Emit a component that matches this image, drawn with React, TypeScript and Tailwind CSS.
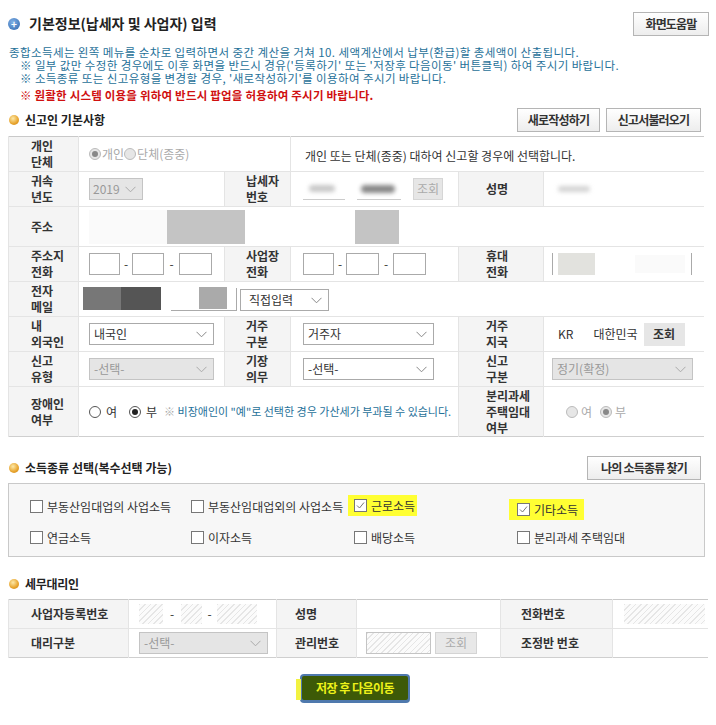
import React from 'react';

const Chevron = ({ color = '#888' }: { color?: string }) => (
  <svg width="11" height="7" viewBox="0 0 11 7" className="shrink-0">
    <path d="M0.5 0.8 L5.5 5.8 L10.5 0.8" fill="none" stroke={color} strokeWidth="1" />
  </svg>
);

const Select = ({ text, className, disabled }: { text: string; className: string; disabled?: boolean }) => (
  <div
    className={`flex items-center justify-between h-[22px] border px-[4px] pr-[6px] text-[12px] whitespace-nowrap ${
      disabled ? 'bg-[#e5e5e5] border-[#c4c4c4] text-[#999]' : 'bg-white border-[#aaa] text-[#333]'
    } ${className}`}
  >
    <span>{text}</span>
    <Chevron color={disabled ? '#aaa' : '#888'} />
  </div>
);

const Radio = ({ on, disabled }: { on?: boolean; disabled?: boolean }) => (
  <span
    className={`inline-flex items-center justify-center w-[12px] h-[12px] rounded-full border ${
      disabled ? 'border-[#bbb] bg-[#e6e6e6]' : 'border-[#555] bg-white'
    }`}
  >
    {on && <span className={`w-[6px] h-[6px] rounded-full ${disabled ? 'bg-[#888]' : 'bg-[#222]'}`} />}
  </span>
);

const Check = ({ on }: { on?: boolean }) => (
  <span className="inline-flex items-center justify-center w-[13px] h-[13px] border border-[#777] bg-white shrink-0">
    {on && (
      <svg width="9" height="9" viewBox="0 0 9 9">
        <path d="M1 4.5 L3.5 7 L8 1.5" fill="none" stroke="#777" strokeWidth="1" />
      </svg>
    )}
  </span>
);

const Box = ({ className }: { className: string }) => <div className={`h-[22px] border border-[#aaa] bg-white ${className}`} />;

const Lbl = ({ children, className = 'pl-[22px]' }: { children: React.ReactNode; className?: string }) => (
  <td className={`bg-[#f4f4f4] border-x border-[#e4e4e4] font-bold text-[12px] leading-[16px] text-[#333] align-middle whitespace-nowrap ${className}`}>
    {children}
  </td>
);

const Btn = ({ children, className = '' }: { children: React.ReactNode; className?: string }) => (
  <button className={`h-[24px] border border-[#b5b5b5] bg-gradient-to-b from-white to-[#ededed] font-bold text-[12px] tracking-[-0.8px] whitespace-nowrap text-[#333] ${className}`}>
    {children}
  </button>
);

const Bullet = () => (
  <span className="inline-block w-[10px] h-[10px] rounded-full bg-[radial-gradient(circle_at_40%_35%,#fde9a8,#e7a32c_60%,#c7811a)] shrink-0" />
);

const Hatch = ({ className }: { className: string }) => (
  <div className={`bg-[image:repeating-linear-gradient(135deg,#e6e6e6_0px,#e6e6e6_1px,#fbfbfb_1px,#fbfbfb_4px)] ${className}`} />
);

export default function App() {
  const tr = 'border-b border-[#e4e4e4]';
  return (
    <div className="w-[716px] h-[725px] bg-white font-['Noto_Sans_CJK_KR',sans-serif] text-[#333] pl-[8px] pr-[10px] pt-[12px]">
      {/* 제목 */}
      <div className="flex justify-between items-start">
        <div className="flex items-center gap-[9px] pt-[1px]">
          <span className="inline-flex items-center justify-center w-[12px] h-[12px] rounded-full bg-[radial-gradient(circle_at_40%_35%,#7fb0e6,#2e66ad)] text-white text-[10px] leading-none font-bold">+</span>
          <span className="text-[14px] font-bold text-[#222]">기본정보(납세자 및 사업자) 입력</span>
        </div>
        <Btn className="mr-[-3px] w-[76px]">화면도움말</Btn>
      </div>

      {/* 안내 */}
      <div className="mt-[10px] text-[11.5px] leading-[13px] tracking-[0.4px] text-[#1f7199] whitespace-nowrap">
        <p className="pl-[1px]">종합소득세는 왼쪽 메뉴를 순차로 입력하면서 중간 계산을 거쳐 10. 세액계산에서 납부(환급)할 총세액이 산출됩니다.</p>
        <p className="pl-[12px]">※ 일부 값만 수정한 경우에도 이후 화면을 반드시 경유('등록하기' 또는 '저장후 다음이동' 버튼클릭) 하여 주시기 바랍니다.</p>
        <p className="pl-[12px]">※ 소득종류 또는 신고유형을 변경할 경우, '새로작성하기'를 이용하여 주시기 바랍니다.</p>
        <p className="pl-[12px] mt-[4px] text-[#d01010] font-bold tracking-[0.2px]">※ 원활한 시스템 이용을 위하여 반드시 팝업을 허용하여 주시기 바랍니다.</p>
      </div>

      {/* 신고인 기본사항 */}
      <div className="mt-[6px] flex justify-between items-center h-[23px]">
        <div className="flex items-center gap-[6px] pl-[1px]">
          <Bullet />
          <span className="text-[12px] font-bold text-[#222]">신고인 기본사항</span>
        </div>
        <div className="flex gap-[6px] mr-[5px]">
          <Btn className="w-[83px]">새로작성하기</Btn>
          <Btn className="w-[95px]">신고서불러오기</Btn>
        </div>
      </div>

      <table className="mt-[5px] w-[696px] table-fixed border-collapse border-t border-t-[#c9c9c9] border-b border-b-[#cfcfcf] text-[12px]">
        <colgroup>
          <col className="w-[70px]" />
          <col className="w-[146px]" />
          <col className="w-[66px]" />
          <col className="w-[168px]" />
          <col className="w-[85px]" />
          <col />
        </colgroup>
        <tbody>
          <tr className={`${tr} h-[35px]`}>
            <Lbl>개인<br />단체</Lbl>
            <td colSpan={2} className="pl-[10px] text-[#aaa] border-r border-[#e4e4e4]">
              <div className="flex items-center">
                <Radio on disabled />
                <span className="ml-[1px]">개인</span>
                <Radio disabled />
                <span className="ml-[1px]">단체(종중)</span>
              </div>
            </td>
            <td colSpan={3} className="pl-[14px] pt-[4px] text-[#333]">개인 또는 단체(종중) 대하여 신고할 경우에 선택합니다.</td>
          </tr>
          <tr className={`${tr} h-[35px]`}>
            <Lbl>귀속<br />년도</Lbl>
            <td className="pl-[10px]">
              <Select text="2019" disabled className="w-[54px] text-[#888] pl-[3px] pr-[4px]" />
            </td>
            <Lbl className="pl-[21px]">납세자<br />번호</Lbl>
            <td className="pl-[12px]">
              <div className="flex items-center gap-[12px]">
                <div className="relative w-[42px] h-[22px] border-b border-[#ccc]">
                  <div className="absolute left-[6px] top-[7px] w-[26px] h-[7px] rounded-full bg-[#c8c8c8] blur-[2px]" />
                </div>
                <div className="relative w-[44px] h-[22px] border-b border-[#ccc]">
                  <div className="absolute left-[4px] top-[7px] w-[34px] h-[8px] rounded-full bg-[#888] blur-[2px]" />
                </div>
                <div className="h-[22px] w-[30px] bg-[#e6e6e6] border border-[#d6d6d6] text-[#aaa] flex items-center justify-center">조회</div>
              </div>
            </td>
            <Lbl className="pl-[27px]">성명</Lbl>
            <td className="pl-[14px]">
              <div className="w-[32px] h-[6px] rounded-full bg-[#d4d4d4] blur-[2px]" />
            </td>
          </tr>
          <tr className={`${tr} h-[40px]`}>
            <Lbl>주소</Lbl>
            <td colSpan={5}>
              <div className="flex items-center h-[34px]">
                <div className="ml-[10px] w-[78px] h-[34px] bg-[#fafafa]" />
                <div className="w-[78px] h-[34px] bg-[#c4c4c4]" />
                <div className="w-[110px]" />
                <div className="w-[44px] h-[34px] bg-[#c4c4c4]" />
              </div>
            </td>
          </tr>
          <tr className={`${tr} h-[35px]`}>
            <Lbl>주소지<br />전화</Lbl>
            <td className="pl-[10px]">
              <div className="flex items-center">
                <Box className="w-[31px]" />
                <span className="w-[12px] text-center">-</span>
                <Box className="w-[32px]" />
                <span className="w-[15px] text-center">-</span>
                <Box className="w-[33px]" />
              </div>
            </td>
            <Lbl className="pl-[21px]">사업장<br />전화</Lbl>
            <td className="pl-[12px]">
              <div className="flex items-center">
                <Box className="w-[31px]" />
                <span className="w-[12px] text-center">-</span>
                <Box className="w-[33px]" />
                <span className="w-[14px] text-center">-</span>
                <Box className="w-[33px]" />
              </div>
            </td>
            <Lbl className="pl-[27px]">휴대<br />전화</Lbl>
            <td className="pl-[8px]">
              <div className="w-[140px] h-[22px] border-x border-[#aaa] flex items-center">
                <div className="ml-[5px] w-[37px] h-[22px] bg-[#e2e2de]" />
                <div className="ml-[40px] w-[50px] h-[18px] bg-[#fafafa]" />
              </div>
            </td>
          </tr>
          <tr className={`${tr} h-[35px]`}>
            <Lbl>전자<br />메일</Lbl>
            <td colSpan={5} className="pl-[4px]">
              <div className="flex items-start h-[24px]">
                <div className="w-[38px] h-[23px] bg-[#777]" />
                <div className="w-[40px] h-[23px] bg-[#555]" />
                <div className="ml-[10px] mt-[1px] relative w-[66px] h-[23px] border-b border-r border-[#aaa]">
                  <div className="absolute left-[28px] -top-[1px] w-[28px] h-[22px] bg-[#aaa]" />
                </div>
                <Select text="직접입력" className="ml-[3px] mt-[2px] w-[89px] pl-[8px]" />
              </div>
            </td>
          </tr>
          <tr className={`${tr} h-[35px]`}>
            <Lbl>내<br />외국인</Lbl>
            <td className="pl-[10px]">
              <Select text="내국인" className="w-[125px]" />
            </td>
            <Lbl className="pl-[21px]">거주<br />구분</Lbl>
            <td className="pl-[12px]">
              <Select text="거주자" className="w-[131px]" />
            </td>
            <Lbl className="pl-[27px]">거주<br />지국</Lbl>
            <td className="pl-[14px]">
              <div className="flex items-center">
                <span>KR</span>
                <span className="ml-[20px]">대한민국</span>
                <span className="ml-[6px] w-[41px] h-[23px] bg-[#e6e6e6] font-bold flex items-center justify-center">조회</span>
              </div>
            </td>
          </tr>
          <tr className={`${tr} h-[35px]`}>
            <Lbl>신고<br />유형</Lbl>
            <td className="pl-[10px]">
              <Select text="-선택-" disabled className="w-[125px]" />
            </td>
            <Lbl className="pl-[21px]">기장<br />의무</Lbl>
            <td className="pl-[12px]">
              <Select text="-선택-" className="w-[131px]" />
            </td>
            <Lbl className="pl-[27px]">신고<br />구분</Lbl>
            <td className="pl-[8px]">
              <Select text="정기(확정)" disabled className="w-[141px]" />
            </td>
          </tr>
          <tr className="h-[50px]">
            <Lbl>장애인<br />여부</Lbl>
            <td colSpan={3} className="pl-[10px]">
              <div className="flex items-center whitespace-nowrap">
                <Radio />
                <span className="ml-[5px]">여</span>
                <span className="ml-[12px] inline-flex"><Radio on /></span>
                <span className="ml-[5px]">부</span>
                <span className="ml-[7px] text-[11px] text-[#1f7199]">
                  <span className="text-[#aaa]">※</span> 비장애인이 "예"로 선택한 경우 가산세가 부과될 수 있습니다.
                </span>
              </div>
            </td>
            <Lbl className="pl-[27px]">분리과세<br />주택임대<br />여부</Lbl>
            <td className="pl-[22px] text-[#aaa]">
              <div className="flex items-center">
                <Radio disabled />
                <span className="ml-[3px]">여</span>
                <span className="ml-[8px] inline-flex"><Radio on disabled /></span>
                <span className="ml-[3px]">부</span>
              </div>
            </td>
          </tr>
        </tbody>
      </table>

      {/* 소득종류 선택 */}
      <div className="mt-[19px] flex justify-between items-center h-[23px]">
        <div className="flex items-center gap-[6px] pl-[1px]">
          <Bullet />
          <span className="text-[12px] font-bold text-[#222]">소득종류 선택(복수선택 가능)</span>
        </div>
        <Btn className="mr-[5px] w-[114px]">나의 소득종류 찾기</Btn>
      </div>
      <div className="mt-[4px] w-[697px] h-[74px] border border-[#c9c9c9] bg-[#f7f7f7] text-[12px] text-[#333] pl-[21px] pt-[15px] whitespace-nowrap">
        <div className="grid grid-cols-[161px_163px_163px_1fr] gap-y-[10px]">
          <div className="flex items-center gap-[4px] h-[15px]"><Check /><span>부동산임대업의 사업소득</span></div>
          <div className="flex items-center gap-[4px] h-[15px]"><Check /><span>부동산임대업외의 사업소득</span></div>
          <div className="-ml-[6px] -mt-[4px] flex items-center gap-[4px] h-[21px] w-[69px] pl-[6px] bg-[#ffff33]"><Check on /><span>근로소득</span></div>
          <div className="-ml-[8px] flex items-center gap-[4px] h-[21px] w-[75px] pl-[8px] bg-[#ffff33]"><Check on /><span>기타소득</span></div>
          <div className="flex items-center gap-[4px] h-[15px]"><Check /><span>연금소득</span></div>
          <div className="flex items-center gap-[4px] h-[15px]"><Check /><span>이자소득</span></div>
          <div className="flex items-center gap-[4px] h-[15px]"><Check /><span>배당소득</span></div>
          <div className="flex items-center gap-[4px] h-[15px]"><Check /><span>분리과세 주택임대</span></div>
        </div>
      </div>

      {/* 세무대리인 */}
      <div className="mt-[19px] flex items-center gap-[6px] h-[16px] pl-[1px]">
        <Bullet />
        <span className="text-[12px] font-bold text-[#222] tracking-[-0.3px]">세무대리인</span>
      </div>
      <table className="mt-[7px] w-[700px] table-fixed border-collapse border-t border-t-[#c9c9c9] border-b border-b-[#cfcfcf] text-[12px]">
        <colgroup>
          <col className="w-[120px]" />
          <col className="w-[148px]" />
          <col className="w-[80px]" />
          <col className="w-[144px]" />
          <col className="w-[112px]" />
          <col />
        </colgroup>
        <tbody>
          <tr className={`${tr} h-[29px]`}>
            <Lbl className="pl-[22px]">사업자등록번호</Lbl>
            <td className="pl-[10px]">
              <div className="flex items-center">
                <Hatch className="w-[24px] h-[20px]" />
                <span className="w-[18px] text-center">-</span>
                <Hatch className="w-[21px] h-[20px]" />
                <span className="w-[15px] text-center">-</span>
                <Hatch className="w-[40px] h-[20px]" />
              </div>
            </td>
            <Lbl className="pl-[18px]">성명</Lbl>
            <td />
            <Lbl className="pl-[20px]">전화번호</Lbl>
            <td className="pl-[11px]">
              <Hatch className="w-[81px] h-[20px]" />
            </td>
          </tr>
          <tr className="h-[29px]">
            <Lbl className="pl-[22px]">대리구분</Lbl>
            <td className="pl-[10px]">
              <Select text="-선택-" disabled className="w-[129px]" />
            </td>
            <Lbl className="pl-[18px]">관리번호</Lbl>
            <td className="pl-[9px]">
              <div className="flex items-center gap-[4px]">
                <Hatch className="w-[65px] h-[22px] border border-[#c4c4c4]" />
                <span className="w-[42px] h-[22px] bg-[#e8e8e8] border border-[#d4d4d4] text-[#aaa] flex items-center justify-center">조회</span>
              </div>
            </td>
            <Lbl className="pl-[20px]">조정반 번호</Lbl>
            <td />
          </tr>
        </tbody>
      </table>

      <div className="mt-[16px] flex justify-center pr-[4px]">
        <div className="relative">
          <div className="absolute -left-[4px] top-[5px] w-[5px] h-[21px] bg-[#f2f241]" />
          <button className="block w-[110px] h-[29px] rounded-[4px] bg-[#4f79ad] p-[2px] pb-[3px]">
            <div className="w-full h-full bg-[#3d5a07] rounded-[2px] flex items-center justify-center text-[#eef21a] font-bold text-[12px] tracking-[-0.5px] whitespace-nowrap">
              저장 후 다음이동
            </div>
          </button>
        </div>
      </div>
    </div>
  );
}
